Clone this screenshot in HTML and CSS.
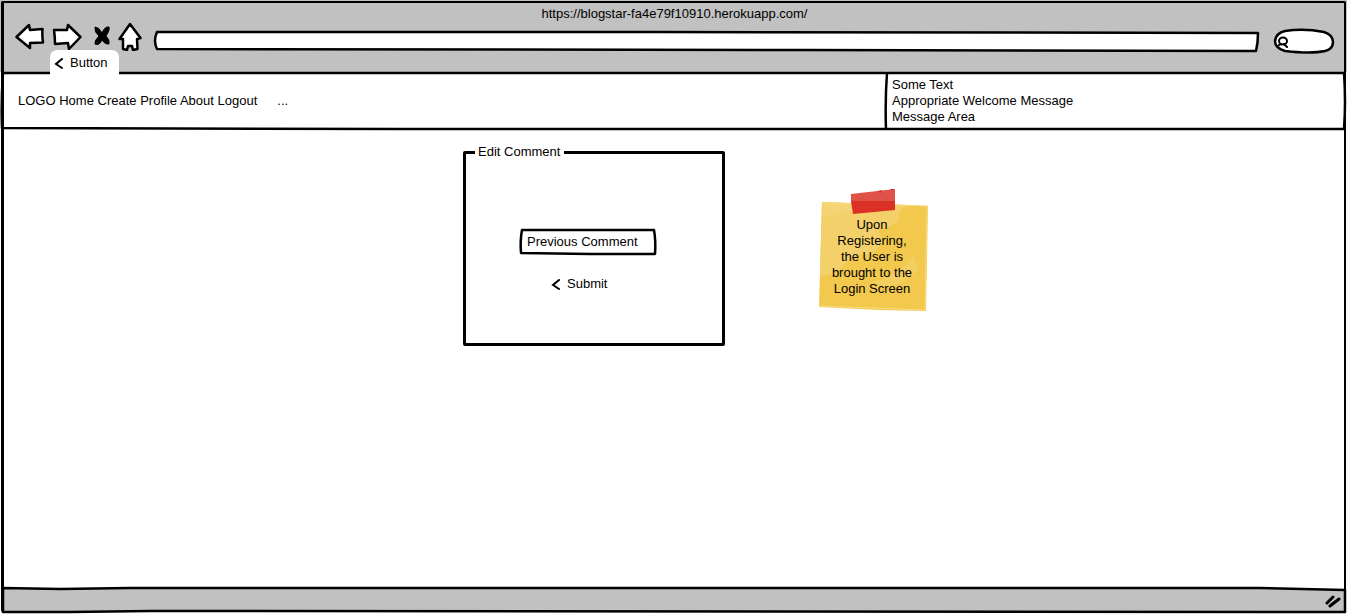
FILE: index.html
```html
<!DOCTYPE html>
<html lang="en">
<head>
<meta charset="utf-8">
<meta name="viewport" content="width=device-width, initial-scale=1">
<title>Edit Comment</title>
<link rel="stylesheet" href="styles.css">
</head>
<body>
<div class="window">
  <header class="chrome">
    <div class="url-title">https://blogstar-fa4e79f10910.herokuapp.com/</div>
    <div class="toolbar">
      <button class="icon-button" type="button" aria-label="Back"><svg width="30" height="30" viewBox="0 0 30 30"><path class="outline" d="M1.500 16L14 4L15 9L27.500 8Q27 15 28 21.500L15 22L15 27Z"/></svg></button>
      <button class="icon-button forward" type="button" aria-label="Forward"><svg width="30" height="30" viewBox="0 0 30 30"><path class="outline" d="M2 9L15 9L16 4L28.500 16L17 28L16 22L3 23Q3 16 2 9Z"/></svg></button>
      <button class="icon-button stop" type="button" aria-label="Stop"><svg width="18" height="30" viewBox="0 0 18 30"><path stroke="#000" stroke-linejoin="round" d="M2 6Q6 6 9 12Q12 5 16 6Q17 9 13 15Q17 19 16 23Q12 24 9 19Q6 25 2 23Q1 20 6 15Q1 11 2 6Z"/></svg></button>
      <button class="icon-button home" type="button" aria-label="Home"><svg width="24" height="30" viewBox="0 0 24 30"><path class="outline" d="M12 3L22.500 17L19 18L19.500 28L15 29L14 25L10 25L9 29L5 28L5 18L1.500 18Z"/></svg></button>
      <div class="address">
        <svg class="frame" viewBox="0 0 1106 20" preserveAspectRatio="none" aria-hidden="true"><path class="sketch paper" d="M3 1L500 1L1105 2Q1105 12 1103 20L650 19L3 18Q-1 10 3 1Z"/></svg>
        <input class="address-input" type="text" aria-label="Address">
      </div>
      <div class="search">
        <svg class="frame" viewBox="0 0 60 24" preserveAspectRatio="none" aria-hidden="true"><path class="sketch paper" d="M11 2Q30 -1 50 3Q59 6 59 13Q59 20 51 22Q37 25 11 22Q1 19 1 12Q2 4 11 2Z"/></svg>
        <svg class="glass" width="12" height="12" viewBox="0 0 12 12" aria-hidden="true"><ellipse cx="5" cy="5" rx="4" ry="3.500"/><path d="M1 9L3 8M6 8L9 11"/></svg>
        <input class="search-input" type="text" aria-label="Search">
      </div>
    </div>
    <button class="tab" type="button"><svg class="chevron" width="10" height="12" viewBox="0 0 10 12" aria-hidden="true"><path d="M8 2L2 7L8 11"/></svg>Button</button>
  </header>
  <div class="band">
    <nav class="nav">
      <svg class="frame" viewBox="0 0 884 58" preserveAspectRatio="none" aria-hidden="true"><path class="sketch" d="M884 1L350 1L2 1Q0 30 1 56L400 57L884 57"/></svg>
      <a href="#">LOGO</a> <a href="#">Home</a> <a href="#">Create</a> <a href="#">Profile</a> <a href="#">About</a> <a href="#">Logout</a><a class="more" href="#">...</a>
    </nav>
    <aside class="messages">
      <svg class="frame" viewBox="0 0 462 58" preserveAspectRatio="none" aria-hidden="true"><path class="sketch" d="M2 1L250 1L460 1Q462 30 460 57L230 57L1 57Q0 28 2 1"/></svg>
      <p>Some Text</p>
      <p>Appropriate Welcome Message</p>
      <p>Message Area</p>
    </aside>
  </div>
  <main class="content">
    <form class="comment-form">
      <fieldset class="comment">
        <legend>Edit Comment</legend>
        <div class="field">
          <svg class="frame" viewBox="0 0 136 28" preserveAspectRatio="none" aria-hidden="true"><path class="sketch" d="M2 2L60 2L134 2Q136 13 135 26L70 26L1 25Q0 12 2 2Z"/></svg>
          <input class="field-input" type="text" value="Previous Comment" aria-label="Comment">
        </div>
        <button class="submit" type="button"><svg class="chevron" width="10" height="12" viewBox="0 0 10 12" aria-hidden="true"><path d="M8 2L2 7L8 11"/></svg>Submit</button>
      </fieldset>
    </form>
    <div class="note">
      <svg class="frame" viewBox="0 0 109 123" preserveAspectRatio="none" aria-hidden="true">
        <path fill="#f2c94c" d="M3 14L109 18L107 123L60 122L0 119Z"/>
        <path fill="#f4d06a" d="M3 14L91 17Q76 22 80 32Q66 43 57 40Q70 55 51 66Q35 65 22 80Q12 89 1 88Z"/>
        <path fill="#f5d981" opacity=".4" d="M4 15L45 17Q34 26 24 24Q16 29 4 28ZM54 94Q83 86 94 68L99 81Q84 99 64 98Z"/>
        <path fill="none" stroke="#f7dc83" d="M3 15L108 18L106 122L0 118"/>
        <path fill="#de5248" d="M32 6L76 1L76 14L32 14Z"/>
        <path fill="#db3026" d="M32 13L76 13L76 22L34 26Z"/>
        <path fill="#db3026" d="M59 3L63 2L62 5ZM71 1L75 1L74 3Z"/>
      </svg>
      <p>Upon Registering, the User is brought to the Login Screen</p>
    </div>
  </main>
  <footer class="status">
    <svg class="frame" viewBox="0 0 1347 28" preserveAspectRatio="none" aria-hidden="true"><path class="fill" d="M3 1L1260 1L1345 3L1345 25L3 25Z"/><path class="sketch" d="M3 1L60 2L130 1L1260 1L1345 3L1345 25L150 24L70 25L3 25Z"/></svg>
    <svg class="grip" width="16" height="14" viewBox="0 0 16 14" aria-hidden="true"><path d="M2 9L8 3M5 12L14 5"/></svg>
  </footer>
</div>
</body>
</html>
```
FILE: styles.css
```css
* { box-sizing: border-box; }

body {
  margin: 0;
  background: #fff;
  color: #000;
  font: 13px/16px "Liberation Sans", Arial, sans-serif;
}

p { margin: 0; }
a { color: inherit; text-decoration: none; }
button, input { font: inherit; color: inherit; background: none; border: 0; padding: 0; outline: 0; }
svg { display: block; }

.window {
  position: relative;
  display: flex;
  flex-direction: column;
  min-height: 100vh;
}

/* Side edges of the browser window */
.window::before {
  content: "";
  position: absolute;
  inset: 1px 1px 3px 1px;
  border: solid #000;
  border-width: 2px 2px 0 3px;
  border-radius: 2px;
  pointer-events: none;
}

.frame {
  position: absolute;
  inset: 0;
  width: 100%;
  height: 100%;
  overflow: visible;
  pointer-events: none;
}

.sketch, .outline {
  fill: none;
  stroke: #000;
  stroke-width: 2.5;
  stroke-linejoin: round;
  stroke-linecap: round;
  vector-effect: non-scaling-stroke;
}

.paper, .outline { fill: #fff; }
.fill { fill: #c1c1c1; }

.chrome {
  display: flex;
  flex-direction: column;
  height: 72px;
  padding: 6px 13px 0 15px;
  background: #c1c1c1;
}

.url-title { text-align: center; }

.toolbar {
  display: flex;
  align-items: center;
  height: 28px;
}

.icon-button { flex: none; }
.forward { margin-left: 7px; }
.stop { margin-left: 11px; }
.home { margin-left: 7px; }

.address {
  position: relative;
  flex: 1;
  height: 20px;
  margin: 10px 15px 0 12px;
}

.search {
  position: relative;
  width: 60px;
  height: 24px;
  margin-top: 10px;
}

.address-input, .search-input {
  position: relative;
  display: block;
  width: 100%;
  height: 100%;
  padding: 0 8px;
}

.search-input { padding-left: 18px; }

.glass {
  position: absolute;
  left: 4px;
  top: 7px;
}

.glass, .chevron, .grip {
  fill: none;
  stroke: #000;
  stroke-width: 2;
  stroke-linecap: round;
}

.grip {
  position: relative;
  stroke-width: 3;
}

.tab {
  position: relative;
  z-index: 1;
  display: flex;
  flex: none;
  align-items: center;
  align-self: flex-start;
  gap: 6px;
  height: 25px;
  margin-left: 35px;
  padding: 0 11px 0 4px;
  border-radius: 7px 7px 0 0;
  background: #fff;
}

.band {
  display: flex;
  height: 58px;
  padding: 0 1px;
}

.nav {
  position: relative;
  flex: 1;
  padding: 21px 17px;
}

.more { margin-left: 20px; }

.messages {
  position: relative;
  width: 461px;
  padding: 5px 7px;
}

.content {
  display: flex;
  flex: 1;
  align-items: flex-start;
  gap: 94px;
  padding: 14px 16px 32px 463px;
}

.comment {
  display: flex;
  flex-direction: column;
  align-items: flex-start;
  width: 262px;
  margin: 0;
  padding: 68px 12px 51px 54px;
  border: 3px solid #000;
  border-radius: 2px;
}

.comment legend {
  margin-left: -45px;
  padding: 0 4px 0 3px;
}

.field {
  position: relative;
  width: 136px;
  height: 28px;
}

.field-input {
  position: relative;
  width: 100%;
  height: 26px;
  padding: 0 7px;
}

.submit {
  display: flex;
  align-items: center;
  gap: 6px;
  margin: 20px 0 0 31px;
}

.note {
  position: relative;
  width: 109px;
  margin-top: 44px;
  padding: 29px 13px 14px 10px;
  text-align: center;
}

.note p { position: relative; }

.status {
  position: relative;
  display: flex;
  justify-content: flex-end;
  height: 28px;
  padding: 7px 6px;
}
```
